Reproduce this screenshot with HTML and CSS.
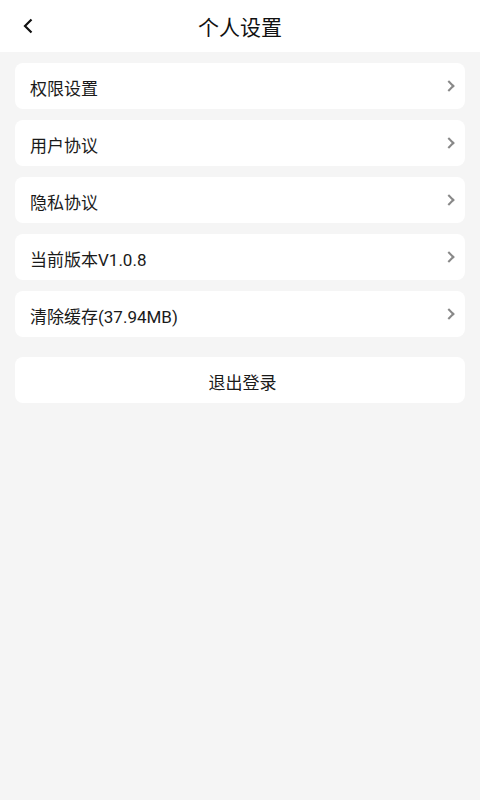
FILE: index.html
```html
<!DOCTYPE html>
<html lang="zh">

<head>
  <meta charset="UTF-8">
  <meta name="viewport" content="width=device-width, initial-scale=1.0">
  <title>个人设置</title>
  <link rel="stylesheet" href="styles.css">
</head>

<body>
  <div class="header">
    <span class="back">
      <svg width="14" height="16" viewBox="0 0 14 16"><path d="M10.5 1.5 L4 8 L10.5 14.5" fill="none" stroke="#111" stroke-width="2.2"/></svg>
    </span>
    <h2>个人设置</h2>
  </div>

  <div class="list">
    <div class="item"><span>权限设置</span><i class="arrow"></i></div>
    <div class="item"><span>用户协议</span><i class="arrow"></i></div>
    <div class="item"><span>隐私协议</span><i class="arrow"></i></div>
    <div class="item"><span>当前版本V1.0.8</span><i class="arrow"></i></div>
    <div class="item"><span>清除缓存(37.94MB)</span><i class="arrow"></i></div>
    <div class="item logout">退出登录</div>
  </div>
</body>

</html>
```

FILE: styles.css
```css
body {
  margin: 0;
  background: #f5f5f5;
  font-family: Roboto, "Noto Sans CJK SC", sans-serif;
  color: #1a1a1a;
  min-height: 800px;
}

.header {
  height: 52px;
  background: #fff;
  display: flex;
  align-items: center;
  justify-content: center;
  position: relative;
}

.header h2 {
  margin: 0;
  font-size: 21px;
  font-weight: 400;
  color: #111;
}

.back {
  position: absolute;
  left: 21px;
  top: 18px;
  display: flex;
}

.list {
  padding: 11px 15px;
  display: flex;
  flex-direction: column;
  gap: 11px;
}

.item {
  height: 46px;
  background: #fff;
  border-radius: 8px;
  display: flex;
  align-items: center;
  justify-content: space-between;
  padding: 2px 10px 0 15px;
  box-sizing: border-box;
  font-size: 17px;
}

.arrow {
  width: 6px;
  height: 6px;
  border-top: 2px solid #888;
  border-right: 2px solid #888;
  transform: rotate(45deg);
  margin-right: 2px;
  margin-top: -2px;
}

.logout {
  margin-top: 9px;
  justify-content: center;
}
```
